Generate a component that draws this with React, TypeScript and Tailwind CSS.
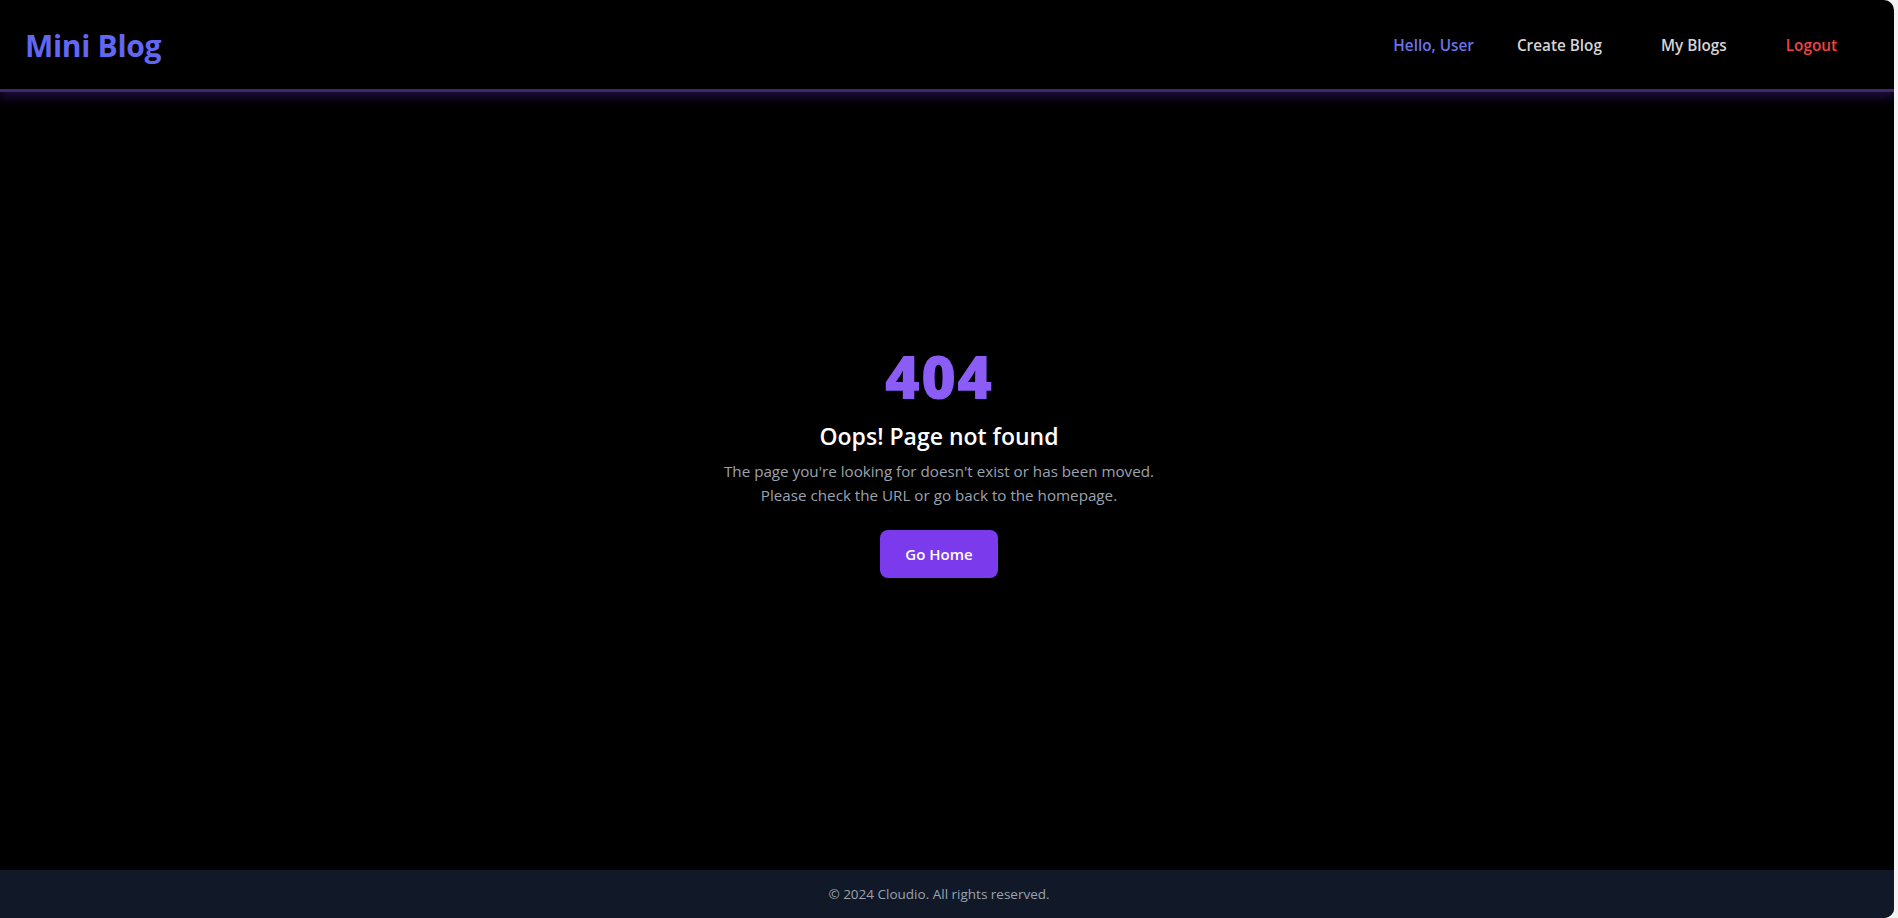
export default function App() {
  return (
    <div className="flex min-h-screen w-full bg-[#f3f3f3] font-['Open_Sans','Noto_Sans',sans-serif]">
      <div className="flex min-h-screen flex-1 flex-col overflow-hidden rounded-r-[10px] bg-black mr-[4px]">
        <header className="relative z-10 flex h-[92px] shrink-0 items-center justify-between border-b-[3px] border-[#3a2a6e] px-[25px] pt-[2px] shadow-[0_5px_10px_rgba(76,29,149,0.45)]">
          <h1 className="text-[30px] font-bold tracking-[-0.3px] text-[#6366f1]">Mini Blog</h1>

          <nav className="flex items-center pr-[32px] text-[15.3px] font-semibold">
            <span className="text-[#6d73e6]">Hello, User</span>
            <a href="#" className="ml-[43px] text-[#d4d4d8]">Create Blog</a>
            <a href="#" className="ml-[59px] text-[#d4d4d8]">My Blogs</a>
            <a href="#" className="ml-[59px] text-[#ef4444]">Logout</a>
          </nav>
        </header>

        <main className="mr-[16px] flex flex-1 flex-col items-center justify-center pb-[38px] text-center">
          <h2 className="text-[60px] font-extrabold leading-none tracking-[1px] text-[#8b5cf6]">404</h2>
          <p className="mt-[13px] text-[23px] font-semibold text-white">Oops! Page not found</p>
          <p className="mt-[5px] text-[15.2px] leading-6 text-[#9ca3af]">
            The page you're looking for doesn't exist or has been moved.
            <br />
            Please check the URL or go back to the homepage.
          </p>
          <button className="mt-[23px] h-[48px] w-[118px] rounded-lg bg-[#7c3aed] text-[15px] font-semibold text-white">
            Go Home
          </button>
        </main>

        <footer className="flex h-[48px] shrink-0 items-center justify-center bg-[#111827] pr-[16px] text-[13.5px] text-[#9ca3af]">
          © 2024 Cloudio. All rights reserved.
        </footer>
      </div>
    </div>
  );
}
